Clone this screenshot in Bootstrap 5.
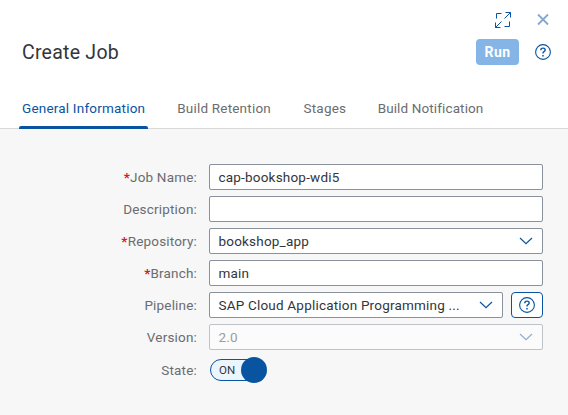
<!DOCTYPE html>
<html lang="en">
<head>
<meta charset="utf-8">
<meta name="viewport" content="width=device-width, initial-scale=1">
<title>Create Job</title>
<link href="https://cdn.jsdelivr.net/npm/bootstrap@5.3.0/dist/css/bootstrap.min.css" rel="stylesheet">
<style>
body{font-family:Roboto,"Noto Sans",sans-serif;font-size:13.5px;line-height:20px;letter-spacing:.2px;color:#32363a;background:#f7f7f7;height:415px;overflow:hidden}
svg{display:block;fill:none;stroke:#0854a0;flex:none}
.top-area{height:129px;border-bottom:1px solid #d9d9d9}
.window-tools{height:39px;padding:11px 19px 0 0;gap:25px}
.title-row{height:26px;padding:0 17px 0 22px}
.job-title{font-size:19.5px;line-height:26px;font-weight:400;letter-spacing:.25px;padding-top:2px}
.run-btn,.run-btn:disabled{width:43px;height:26px;padding:0;background:#84b5e6;color:#fff;border:0;border-radius:4px;font-size:14px;font-weight:700;line-height:26px;letter-spacing:.4px;opacity:1}
.job-tabs{height:64px;padding-left:19px;gap:26px}
.job-tabs .nav-link{height:64px;padding:33px 3px 0;color:#6a6d70;border-radius:0;position:relative;white-space:nowrap}
.job-tabs .nav-link:nth-child(n+3){left:.6px}
.job-tabs .nav-link:last-child{letter-spacing:.12px;left:0}
.job-tabs .nav-link.active{color:#0854a0}
.job-tabs .nav-link.active::after{content:"";position:absolute;left:0;right:0;bottom:0;height:3px;background:#0854a0;border-radius:2px 2px 0 0}
.job-form{padding:35px 25px 0 0;gap:6px}
.field-row{height:26px}
.field-row .col-form-label{width:197px;padding:0;margin-right:12px;text-align:right;color:#6a6d70;font-size:13.5px;line-height:26px;letter-spacing:.18px}
.req{color:#d02020;font-weight:700}
.field{height:26px;min-height:26px;padding:0 9px 0 8.5px;border:1px solid #89919a;border-radius:2px;background:#fff;color:#32363a;font-size:13.5px;line-height:24px;letter-spacing:.2px}
.field.off{background:#fbfbfb;border-color:#bfc3c8;color:#9b9da0}
.off svg{opacity:.45}
.help-btn{width:32px;height:26px;padding:0;border:1px solid #0854a0;border-radius:4px;background:#fff}
.switch-row{margin-top:1px}
.toggle{width:58px;height:26px;margin-left:1px;position:relative}
.track{width:50px;height:22px;border:1px solid #0854a0;border-radius:11px;background:#ebf5fe;font-size:11.5px;line-height:20px;padding-left:8px}
.knob{position:absolute;right:1px;top:0;width:26px;height:26px;border-radius:50%;background:#0854a0}
</style>
</head>
<body>
<header class="top-area bg-white">
  <div class="window-tools d-flex justify-content-end align-items-start">
    <svg width="18" height="18" viewBox="0 0 18 18" stroke-width="1"><path d="M7.5 2.5h-5v5M10.5 15.5h5v-5M11.5 1.5h5v5M16.5 1.5l-6 6M1.5 11.5v5h5M1.5 16.5l6-6"/></svg>
    <svg width="12" height="18" viewBox="0 0 12 18" stroke-width="1.8"><path d="M1 3.5l10 10M11 3.5l-10 10" stroke="#84a9cf"/></svg>
  </div>
  <div class="title-row d-flex align-items-center">
    <h1 class="job-title m-0 me-auto">Create Job</h1>
    <button class="btn run-btn" type="button" disabled>Run</button>
    <svg class="ms-3" width="16" height="16" viewBox="0 .5 16 16" stroke-width="1.1"><circle cx="8" cy="8.5" r="7.4"/><path d="M5.8 6.7Q5.8 4.6 8 4.6T10.2 6.5Q10.2 7.5 9 8.1T8 10" stroke-width="1.4"/><path d="M8 11.5v1.4" stroke-width="1.5"/></svg>
  </div>
  <nav class="nav job-tabs flex-nowrap">
    <a class="nav-link active" href="#">General Information</a>
    <a class="nav-link" href="#">Build Retention</a>
    <a class="nav-link" href="#">Stages</a>
    <a class="nav-link" href="#">Build Notification</a>
  </nav>
</header>
<main class="job-form d-flex flex-column">
  <div class="field-row d-flex"><label class="col-form-label"><span class="req">*</span>Job Name:</label><div class="field flex-fill">cap-bookshop-wdi5</div></div>
  <div class="field-row d-flex"><label class="col-form-label">Description:</label><div class="field flex-fill"></div></div>
  <div class="field-row d-flex"><label class="col-form-label"><span class="req">*</span>Repository:</label><div class="field flex-fill d-flex align-items-center justify-content-between"><span>bookshop_app</span><svg width="14" height="8" viewBox="0 0 14 8" stroke-width="1.15"><path d="M1 1l6 5.7L13 1"/></svg></div></div>
  <div class="field-row d-flex"><label class="col-form-label"><span class="req">*</span>Branch:</label><div class="field flex-fill">main</div></div>
  <div class="field-row d-flex"><label class="col-form-label">Pipeline:</label><div class="field flex-fill d-flex align-items-center justify-content-between"><span>SAP Cloud Application Programming ...</span><svg width="14" height="8" viewBox="0 0 14 8" stroke-width="1.15"><path d="M1 1l6 5.7L13 1"/></svg></div>
    <button class="btn help-btn ms-2 d-flex align-items-center justify-content-center" type="button" aria-label="Help"><svg width="16" height="16" viewBox="0 .5 16 16" stroke-width="1.1"><circle cx="8" cy="8.5" r="7.4"/><path d="M5.8 6.7Q5.8 4.6 8 4.6T10.2 6.5Q10.2 7.5 9 8.1T8 10" stroke-width="1.4"/><path d="M8 11.5v1.4" stroke-width="1.5"/></svg></button></div>
  <div class="field-row d-flex"><label class="col-form-label">Version:</label><div class="field off flex-fill d-flex align-items-center justify-content-between"><span>2.0</span><svg width="14" height="8" viewBox="0 0 14 8" stroke-width="1.15"><path d="M1 1l6 5.7L13 1"/></svg></div></div>
  <div class="field-row switch-row d-flex"><label class="col-form-label">State:</label><div class="toggle d-flex align-items-center" role="switch" aria-checked="true"><span class="track">ON</span><span class="knob"></span></div></div>
</main>
<script src="https://cdn.jsdelivr.net/npm/bootstrap@5.3.0/dist/js/bootstrap.bundle.min.js"></script>
</body>
</html>
